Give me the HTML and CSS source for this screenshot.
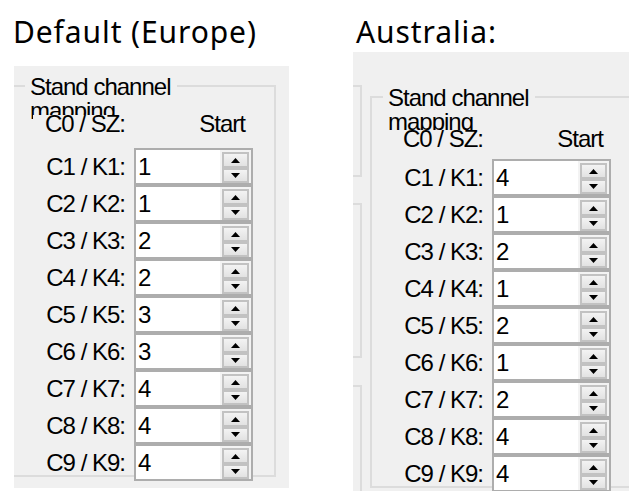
FILE: index.html
```html
<!DOCTYPE html>
<html>
<head>
<meta charset="utf-8">
<link rel="stylesheet" href="styles.css">
</head>
<body>
<div class="page">
  <section class="col col-left">
    <h1 class="heading">Default (Europe)</h1>
    <div class="window win-left">
      <div class="group">
        <div class="caption">Stand channel mapping</div>
        <div class="grid">
          <div class="lbl head">C0 / SZ:</div><div class="head start">Start</div>
          <div class="lbl">C1 / K1:</div><div class="box"><span class="val">1</span><span class="spin"><span class="btn up"><svg width="9" height="5" viewBox="0 0 9 5"><path d="M4.5 0L9 5H0z"/></svg></span><span class="btn dn"><svg width="9" height="5" viewBox="0 0 9 5"><path d="M0 0H9L4.5 5z"/></svg></span></span></div>
          <div class="lbl">C2 / K2:</div><div class="box"><span class="val">1</span><span class="spin"><span class="btn up"><svg width="9" height="5" viewBox="0 0 9 5"><path d="M4.5 0L9 5H0z"/></svg></span><span class="btn dn"><svg width="9" height="5" viewBox="0 0 9 5"><path d="M0 0H9L4.5 5z"/></svg></span></span></div>
          <div class="lbl">C3 / K3:</div><div class="box"><span class="val">2</span><span class="spin"><span class="btn up"><svg width="9" height="5" viewBox="0 0 9 5"><path d="M4.5 0L9 5H0z"/></svg></span><span class="btn dn"><svg width="9" height="5" viewBox="0 0 9 5"><path d="M0 0H9L4.5 5z"/></svg></span></span></div>
          <div class="lbl">C4 / K4:</div><div class="box"><span class="val">2</span><span class="spin"><span class="btn up"><svg width="9" height="5" viewBox="0 0 9 5"><path d="M4.5 0L9 5H0z"/></svg></span><span class="btn dn"><svg width="9" height="5" viewBox="0 0 9 5"><path d="M0 0H9L4.5 5z"/></svg></span></span></div>
          <div class="lbl">C5 / K5:</div><div class="box"><span class="val">3</span><span class="spin"><span class="btn up"><svg width="9" height="5" viewBox="0 0 9 5"><path d="M4.5 0L9 5H0z"/></svg></span><span class="btn dn"><svg width="9" height="5" viewBox="0 0 9 5"><path d="M0 0H9L4.5 5z"/></svg></span></span></div>
          <div class="lbl">C6 / K6:</div><div class="box"><span class="val">3</span><span class="spin"><span class="btn up"><svg width="9" height="5" viewBox="0 0 9 5"><path d="M4.5 0L9 5H0z"/></svg></span><span class="btn dn"><svg width="9" height="5" viewBox="0 0 9 5"><path d="M0 0H9L4.5 5z"/></svg></span></span></div>
          <div class="lbl">C7 / K7:</div><div class="box"><span class="val">4</span><span class="spin"><span class="btn up"><svg width="9" height="5" viewBox="0 0 9 5"><path d="M4.5 0L9 5H0z"/></svg></span><span class="btn dn"><svg width="9" height="5" viewBox="0 0 9 5"><path d="M0 0H9L4.5 5z"/></svg></span></span></div>
          <div class="lbl">C8 / K8:</div><div class="box"><span class="val">4</span><span class="spin"><span class="btn up"><svg width="9" height="5" viewBox="0 0 9 5"><path d="M4.5 0L9 5H0z"/></svg></span><span class="btn dn"><svg width="9" height="5" viewBox="0 0 9 5"><path d="M0 0H9L4.5 5z"/></svg></span></span></div>
          <div class="lbl">C9 / K9:</div><div class="box"><span class="val">4</span><span class="spin"><span class="btn up"><svg width="9" height="5" viewBox="0 0 9 5"><path d="M4.5 0L9 5H0z"/></svg></span><span class="btn dn"><svg width="9" height="5" viewBox="0 0 9 5"><path d="M0 0H9L4.5 5z"/></svg></span></span></div>
        </div>
      </div>
    </div>
  </section>
  <section class="col col-right">
    <h1 class="heading">Australia:</h1>
    <div class="window win-right">
      <div class="side">
        <div class="side-box side-a"></div>
        <div class="side-box side-b"></div>
        <div class="side-box side-c"></div>
      </div>
      <div class="group group-au">
        <div class="caption">Stand channel mapping</div>
        <div class="grid">
          <div class="lbl head">C0 / SZ:</div><div class="head start">Start</div>
          <div class="lbl">C1 / K1:</div><div class="box"><span class="val">4</span><span class="spin"><span class="btn up"><svg width="9" height="5" viewBox="0 0 9 5"><path d="M4.5 0L9 5H0z"/></svg></span><span class="btn dn"><svg width="9" height="5" viewBox="0 0 9 5"><path d="M0 0H9L4.5 5z"/></svg></span></span></div>
          <div class="lbl">C2 / K2:</div><div class="box"><span class="val">1</span><span class="spin"><span class="btn up"><svg width="9" height="5" viewBox="0 0 9 5"><path d="M4.5 0L9 5H0z"/></svg></span><span class="btn dn"><svg width="9" height="5" viewBox="0 0 9 5"><path d="M0 0H9L4.5 5z"/></svg></span></span></div>
          <div class="lbl">C3 / K3:</div><div class="box"><span class="val">2</span><span class="spin"><span class="btn up"><svg width="9" height="5" viewBox="0 0 9 5"><path d="M4.5 0L9 5H0z"/></svg></span><span class="btn dn"><svg width="9" height="5" viewBox="0 0 9 5"><path d="M0 0H9L4.5 5z"/></svg></span></span></div>
          <div class="lbl">C4 / K4:</div><div class="box"><span class="val">1</span><span class="spin"><span class="btn up"><svg width="9" height="5" viewBox="0 0 9 5"><path d="M4.5 0L9 5H0z"/></svg></span><span class="btn dn"><svg width="9" height="5" viewBox="0 0 9 5"><path d="M0 0H9L4.5 5z"/></svg></span></span></div>
          <div class="lbl">C5 / K5:</div><div class="box"><span class="val">2</span><span class="spin"><span class="btn up"><svg width="9" height="5" viewBox="0 0 9 5"><path d="M4.5 0L9 5H0z"/></svg></span><span class="btn dn"><svg width="9" height="5" viewBox="0 0 9 5"><path d="M0 0H9L4.5 5z"/></svg></span></span></div>
          <div class="lbl">C6 / K6:</div><div class="box"><span class="val">1</span><span class="spin"><span class="btn up"><svg width="9" height="5" viewBox="0 0 9 5"><path d="M4.5 0L9 5H0z"/></svg></span><span class="btn dn"><svg width="9" height="5" viewBox="0 0 9 5"><path d="M0 0H9L4.5 5z"/></svg></span></span></div>
          <div class="lbl">C7 / K7:</div><div class="box"><span class="val">2</span><span class="spin"><span class="btn up"><svg width="9" height="5" viewBox="0 0 9 5"><path d="M4.5 0L9 5H0z"/></svg></span><span class="btn dn"><svg width="9" height="5" viewBox="0 0 9 5"><path d="M0 0H9L4.5 5z"/></svg></span></span></div>
          <div class="lbl">C8 / K8:</div><div class="box"><span class="val">4</span><span class="spin"><span class="btn up"><svg width="9" height="5" viewBox="0 0 9 5"><path d="M4.5 0L9 5H0z"/></svg></span><span class="btn dn"><svg width="9" height="5" viewBox="0 0 9 5"><path d="M0 0H9L4.5 5z"/></svg></span></span></div>
          <div class="lbl">C9 / K9:</div><div class="box"><span class="val">4</span><span class="spin"><span class="btn up"><svg width="9" height="5" viewBox="0 0 9 5"><path d="M4.5 0L9 5H0z"/></svg></span><span class="btn dn"><svg width="9" height="5" viewBox="0 0 9 5"><path d="M0 0H9L4.5 5z"/></svg></span></span></div>
        </div>
      </div>
    </div>
  </section>
</div>
</body>
</html>
```

FILE: styles.css
```css
html, body {
  margin: 0;
  padding: 0;
  background: #ffffff;
}

.page {
  display: flex;
  gap: 64px;
  padding: 12px 0 0 14px;
  width: 629px;
  height: 491px;
  box-sizing: border-box;
  overflow: hidden;
}

.col {
  display: flex;
  flex-direction: column;
  flex-shrink: 0;
}

.col-left { width: 275px; }
.col-right { width: 276px; }

.heading {
  margin: 0;
  font-family: "Noto Sans", "Open Sans", sans-serif;
  font-weight: 400;
  font-size: 30px;
  line-height: 40px;
  letter-spacing: 0.9px;
  color: #000;
  white-space: nowrap;
}

.col-left .heading { margin-left: -1px; }
.col-right .heading { padding-left: 3px; }

.window {
  background: #f0f0f0;
  overflow: hidden;
  box-sizing: border-box;
}

.win-left {
  margin-top: 14px;
  height: 422px;
  padding-top: 19px;
}

.win-left .group { margin-left: -2px; }

.win-right {
  height: 439px;
  padding-top: 33px;
  display: flex;
  align-items: flex-start;
  gap: 8px;
}

.side {
  display: flex;
  flex-direction: column;
  gap: 26px;
  margin-left: -11px;
}

.side-box {
  width: 20px;
  box-sizing: border-box;
  border: 2px solid #dcdcdc;
}

.side-a { height: 92px; }
.side-b { height: 155px; margin-bottom: 1px; }
.side-c { height: 140px; }

.group {
  position: relative;
  flex-shrink: 0;
  width: 264px;
  height: 392px;
  box-sizing: border-box;
  border: 2px solid #dcdcdc;
  font-family: "Liberation Sans", Arial, sans-serif;
  font-size: 24px;
  letter-spacing: -1px;
  color: #000;
}

.group-au { margin-top: 11px; }

.caption {
  position: absolute;
  left: 11px;
  top: -12px;
  width: 152px;
  box-sizing: border-box;
  padding-left: 5px;
  line-height: 24px;
  background: #f0f0f0;
}

.grid {
  display: grid;
  grid-template-columns: 92px 119px;
  grid-template-rows: 33px repeat(9, 37px);
  column-gap: 9px;
  padding: 28px 0 0 19px;
}

.lbl {
  text-align: right;
  line-height: 37px;
  white-space: nowrap;
}

.head {
  position: relative;
  z-index: 1;
  align-self: start;
  line-height: 17px;
  background: #f0f0f0;
}

.group-au .head { margin-top: 4px; }

.start {
  text-align: right;
  padding-right: 8px;
  background: transparent;
}

.box {
  display: flex;
  height: 37px;
  box-sizing: border-box;
  border: 2px solid #adadad;
  background: #ffffff;
}

.val {
  flex: 1;
  padding-left: 2px;
  line-height: 33px;
}

.spin {
  width: 31px;
  box-sizing: border-box;
  padding: 2px 2px 0 2px;
  display: flex;
  flex-direction: column;
  background: #f3f3f3;
}

.btn {
  display: flex;
  align-items: center;
  justify-content: center;
  box-sizing: border-box;
  border: 2px solid #c2c2c2;
  background: linear-gradient(#f3f3f3, #e2e2e2);
}

.btn.up { height: 16px; }
.btn.dn { height: 15px; }

.btn svg {
  display: block;
  fill: #000;
}
```
